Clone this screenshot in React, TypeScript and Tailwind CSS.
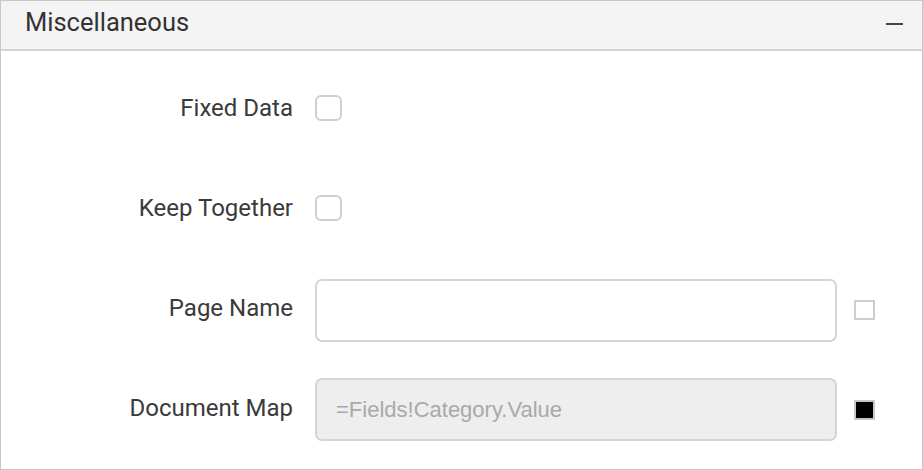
import React from "react";

function Checkbox() {
  return (
    <div className="w-[27px] h-[26px] rounded-[6px] border-2 border-[#cfcfcf] bg-white" />
  );
}

function Row({ label, children }: { label: string; children: React.ReactNode }) {
  return (
    <div className="flex items-center h-[100px]">
      <div className="w-[292px] text-right text-[24px] text-[#3a3a3a] leading-none">{label}</div>
      <div className="ml-[22px] flex items-center">{children}</div>
    </div>
  );
}

export default function App() {
  return (
    <div
      className="w-[923px] h-[470px] border border-[#c8c8c8] bg-white overflow-hidden"
      style={{ fontFamily: "Roboto, 'Noto Sans', sans-serif" }}
    >
      {/* Header */}
      <div className="h-[50px] bg-[#f4f4f4] border-b-2 border-[#d3d3d3] flex items-center justify-between pl-[24px] pr-[19px] pb-[4px]">
        <span className="text-[25.5px] text-[#333333] leading-none">Miscellaneous</span>
        <span className="block w-[17px] h-[2px] bg-[#444444] mt-[2px]" />
      </div>

      <div className="pt-[7px]">
        <Row label="Fixed Data">
          <Checkbox />
        </Row>
        <Row label="Keep Together">
          <Checkbox />
        </Row>
        <Row label="Page Name">
          <div className="mt-[4px] flex items-center">
            <input
              type="text"
              className="w-[522px] h-[63px] rounded-[7px] border-2 border-[#d5d5d5] bg-white outline-none px-[18px]"
            />
            <div className="ml-[17px] w-[21px] h-[20px] border-2 border-[#cdcdcd] bg-white" />
          </div>
        </Row>
        <Row label="Document Map">
          <div className="mt-[3px] flex items-center">
            <div
              className="w-[522px] h-[63px] rounded-[7px] border-2 border-[#d5d5d5] bg-[#eeeeee] flex items-center pl-[19px] text-[22px] text-[#a9a9a9]"
              style={{ fontFamily: "'Liberation Sans', Arial, sans-serif" }}
            >
              =Fields!Category.Value
            </div>
            <div className="ml-[17px] w-[21px] h-[20px] border-2 border-[#c8c8c8] bg-black" />
          </div>
        </Row>
      </div>
    </div>
  );
}
